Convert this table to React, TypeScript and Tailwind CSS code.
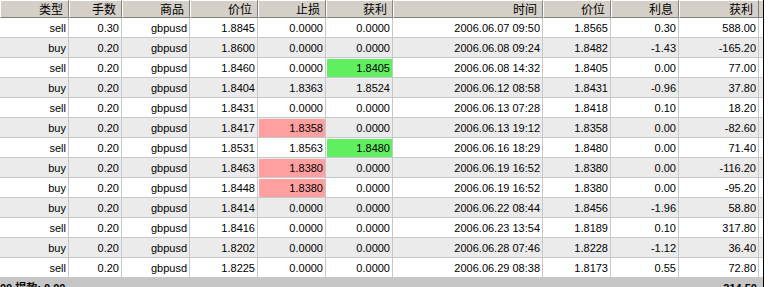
import React from "react";

type Hl = "g" | "r" | undefined;
type Row = { c: string[]; hl?: { [k: number]: Hl } };

const headers = ["类型", "手数", "商品", "价位", "止损", "获利", "时间", "价位", "利息", "获利"];
const widths = ["w-[69px]", "w-[53px]", "w-[68px]", "w-[68px]", "w-[68px]", "w-[67px]", "w-[150px]", "w-[68px]", "w-[68px]", "w-[80px]"];

const rows: Row[] = [
  { c: ["sell", "0.30", "gbpusd", "1.8845", "0.0000", "0.0000", "2006.06.07 09:50", "1.8565", "0.30", "588.00"] },
  { c: ["buy", "0.20", "gbpusd", "1.8600", "0.0000", "0.0000", "2006.06.08 09:24", "1.8482", "-1.43", "-165.20"] },
  { c: ["sell", "0.20", "gbpusd", "1.8460", "0.0000", "1.8405", "2006.06.08 14:32", "1.8405", "0.00", "77.00"], hl: { 5: "g" } },
  { c: ["buy", "0.20", "gbpusd", "1.8404", "1.8363", "1.8524", "2006.06.12 08:58", "1.8431", "-0.96", "37.80"] },
  { c: ["sell", "0.20", "gbpusd", "1.8431", "0.0000", "0.0000", "2006.06.13 07:28", "1.8418", "0.10", "18.20"] },
  { c: ["buy", "0.20", "gbpusd", "1.8417", "1.8358", "0.0000", "2006.06.13 19:12", "1.8358", "0.00", "-82.60"], hl: { 4: "r" } },
  { c: ["sell", "0.20", "gbpusd", "1.8531", "1.8563", "1.8480", "2006.06.16 18:29", "1.8480", "0.00", "71.40"], hl: { 5: "g" } },
  { c: ["buy", "0.20", "gbpusd", "1.8463", "1.8380", "0.0000", "2006.06.19 16:52", "1.8380", "0.00", "-116.20"], hl: { 4: "r" } },
  { c: ["buy", "0.20", "gbpusd", "1.8448", "1.8380", "0.0000", "2006.06.19 16:52", "1.8380", "0.00", "-95.20"], hl: { 4: "r" } },
  { c: ["buy", "0.20", "gbpusd", "1.8414", "0.0000", "0.0000", "2006.06.22 08:44", "1.8456", "-1.96", "58.80"] },
  { c: ["sell", "0.20", "gbpusd", "1.8416", "0.0000", "0.0000", "2006.06.23 13:54", "1.8189", "0.10", "317.80"] },
  { c: ["buy", "0.20", "gbpusd", "1.8202", "0.0000", "0.0000", "2006.06.28 07:46", "1.8228", "-1.12", "36.40"] },
  { c: ["sell", "0.20", "gbpusd", "1.8225", "0.0000", "0.0000", "2006.06.29 08:38", "1.8173", "0.55", "72.80"] },
];

export default function App() {
  return (
    <div className="w-[769px] h-[287px] overflow-hidden bg-white flex font-['Liberation_Sans','Noto_Sans_CJK_SC',sans-serif] text-[11px] text-black">
      <div className="w-[763px] flex flex-col">
        {/* header */}
        <div className="flex h-[18px]">
          {headers.map((h, i) => (
            <div
              key={i}
              className={`${widths[i]} shrink-0 h-[18px] bg-[#d4d0c8] border-t border-l border-t-white border-l-white border-r border-b border-r-[#808080] border-b-[#808080] flex items-center justify-end pr-[5px] font-['Noto_Sans_CJK_SC',sans-serif] text-[12px] leading-[16px]`}
            >
              {h}
            </div>
          ))}
          <div className="flex-1 h-[18px] bg-[#d4d0c8] border-t border-t-white border-b border-b-[#808080]" />
        </div>
        {/* rows */}
        {rows.map((r, ri) => (
          <div key={ri} className={`flex h-[20px] ${ri % 2 === 0 ? "bg-white" : "bg-[#ebebeb]"}`}>
            {r.c.map((v, ci) => {
              const hl = r.hl ? r.hl[ci] : undefined;
              return (
                <div
                  key={ci}
                  className={`${widths[ci]} shrink-0 h-[20px] border-r border-b border-[#c8c8c8] flex`}
                >
                  <div
                    className={`flex-1 mt-[1px] ml-[1px] flex items-center justify-end pr-[2px] leading-[18px] ${
                      hl === "g" ? "bg-[#60ef60]" : hl === "r" ? "bg-[#ffa0a0]" : ""
                    }`}
                  >
                    {v}
                  </div>
                </div>
              );
            })}
            <div className="flex-1 h-[20px] border-b border-[#c8c8c8]" />
          </div>
        ))}
        {/* footer */}
        <div className="h-[20px] bg-[#c6c6c6] flex items-start pt-[3px] font-bold leading-[14px]">
          <div className="flex-1">00 提款: 0.00</div>
          <div className="pr-[6px]">214.50</div>
        </div>
      </div>
      <div className="w-[1px] h-full bg-black" />
      <div className="flex-1 h-full bg-white" />
    </div>
  );
}
